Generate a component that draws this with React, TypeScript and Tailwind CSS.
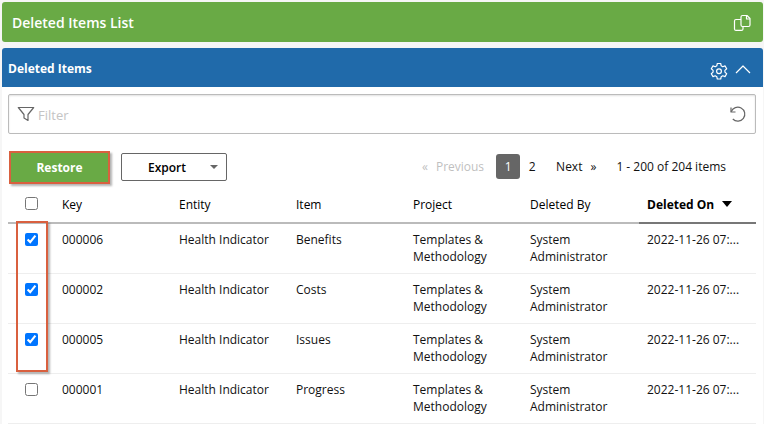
import { ReactNode, useState } from "react";

interface DeletedItem {
  key: string;
  entity: string;
  item: string;
  project: string;
  deletedBy: string;
  deletedOn: string;
}

const makeItem = (key: string, item: string): DeletedItem => ({
  key,
  entity: "Health Indicator",
  item,
  project: "Templates & Methodology",
  deletedBy: "System Administrator",
  deletedOn: "2022-11-26 07:...",
});

const items = [
  makeItem("000006", "Benefits"),
  makeItem("000002", "Costs"),
  makeItem("000005", "Issues"),
  makeItem("000001", "Progress"),
];

const columns = ["Key", "Entity", "Item", "Project", "Deleted By"];

const Icon = ({ children }: { children: ReactNode }) => (
  <svg
    className="h-[18px] w-[18px] shrink-0"
    viewBox="0 0 18 18"
    fill="none"
    stroke="currentColor"
    strokeWidth="1.2"
    strokeLinejoin="round"
    aria-hidden="true"
  >
    {children}
  </svg>
);

const PagesIcon = () => (
  <Icon>
    <path d="M9.500 2.500h4.500l3 3V12a1.500 1.500 0 0 1-1.500 1.500h-6A1.500 1.500 0 0 1 8 12V4a1.500 1.500 0 0 1 1.500-1.500z" />
    <path d="M13.500 2.500V6H17" />
    <path d="M8 6.500H3A1.500 1.500 0 0 0 1.500 8v8A1.500 1.500 0 0 0 3 17.400h5.500A1.500 1.500 0 0 0 10 16v-2.500" />
  </Icon>
);

const GearIcon = () => (
  <Icon>
    <path d="M7.300 1.500h3.400l.5 2.300 1.500.9 2.300-.8 1.700 2.900-1.800 1.600v1.700l1.800 1.600-1.700 2.900-2.300-.8-1.500.9-.5 2.300H7.300l-.5-2.300-1.500-.9-2.300.8-1.700-2.900 1.800-1.600V8.400L1.300 6.800 3 3.900l2.300.8 1.500-.9z" />
    <circle cx="9" cy="9.200" r="2.400" />
  </Icon>
);

const ChevronUpIcon = () => (
  <Icon>
    <path d="M2 11l7-7 7 7" />
  </Icon>
);

const FunnelIcon = () => (
  <Icon>
    <path d="M1.300 2.500h15.400l-5.700 7v6l-4-2.500V9.500z" />
  </Icon>
);

const ResetIcon = () => (
  <Icon>
    <path d="M2 2.500V7h4.500" />
    <path d="M2.200 6.800A7 7 0 1 1 3.800 14" />
  </Icon>
);

const Toolbar = () => (
  <div className="flex h-[34px] items-center justify-between pl-px">
    <div className="flex items-center gap-[11px]">
      <button className="h-[33px] w-[101px] border-2 border-[#d9603f] bg-[#69aa45] pt-px font-bold text-white shadow-[2px_2px_2px_rgba(0,0,0,0.3)]">
        Restore
      </button>
      <button className="flex h-7 w-[106px] items-center justify-end gap-6 rounded-xs border border-[#666] bg-white pr-2 font-semibold text-black">
        Export
        <svg className="h-1 w-2 fill-[#666]" viewBox="0 0 8 4" aria-hidden="true">
          <path d="M0 0h8L4 4z" />
        </svg>
      </button>
    </div>
    <nav className="flex items-center pr-[30px] pb-0.5" aria-label="Pagination">
      <button className="mr-3 flex gap-2 text-[#bfbfbf]" disabled>
        <span>«</span>Previous
      </button>
      <button className="h-[25px] w-6 rounded-[3px] bg-[#666] text-white" aria-current="page">
        1
      </button>
      <button className="h-[25px] w-6">2</button>
      <button className="mr-5 ml-3 flex gap-2">
        Next<span>»</span>
      </button>
      <span>1 - 200 of 204 items</span>
    </nav>
  </div>
);

export default function App() {
  const [selected, setSelected] = useState(["000006", "000002", "000005"]);
  const allSelected = selected.length === items.length;

  const toggle = (key: string) =>
    setSelected((prev) =>
      prev.includes(key) ? prev.filter((k) => k !== key) : [...prev, key]
    );

  return (
    <div className="min-h-screen bg-[#f6f6f6] pt-0.5 pr-px pl-0.5 font-['Open_Sans','Noto_Sans',sans-serif] text-[12px] leading-[17px] text-[#111]">
      {/* Page title */}
      <header className="mb-1.5 flex h-10 items-center justify-between rounded-[3px] bg-[#69aa45] pr-3 pl-2.5 text-white">
        <h1 className="text-[14px] font-semibold">Deleted Items List</h1>
        <button aria-label="Copy">
          <PagesIcon />
        </button>
      </header>

      <section>
        <div className="flex h-[39px] items-center justify-between rounded-t-[3px] bg-[#206aaa] pt-0.5 pr-[11px] pl-1.5 text-white">
          <h2 className="font-bold">Deleted Items</h2>
          <div className="flex gap-1.5 pt-1">
            <button aria-label="Settings">
              <GearIcon />
            </button>
            <button aria-label="Collapse">
              <ChevronUpIcon />
            </button>
          </div>
        </div>

        <div className="bg-white pt-[7px] pr-[7px] pl-1.5">
          {/* Filter */}
          <div className="mb-4 flex h-10 items-center gap-[3px] rounded-xs border border-[#bbb] px-2 text-[#666] shadow-[inset_0_1px_2px_rgba(0,0,0,0.12)]">
            <FunnelIcon />
            <input
              className="min-w-0 flex-1 pt-0.5 text-[13px] outline-none placeholder:text-[#c4c4c4]"
              placeholder="Filter"
              aria-label="Filter"
            />
            <button aria-label="Reset filter">
              <ResetIcon />
            </button>
          </div>

          <Toolbar />

          <div className="relative">
            <table className="w-full table-fixed border-separate border-spacing-0 text-left">
              <thead>
                <tr className="h-10 text-black">
                  <th className="w-[46px] border-b-2 border-[#bbb] pl-[17px]">
                    <input
                      type="checkbox"
                      className="block size-[13px]"
                      aria-label="Select all"
                      checked={allSelected}
                      onChange={() => setSelected(allSelected ? [] : items.map((i) => i.key))}
                    />
                  </th>
                  {columns.map((name) => (
                    <th key={name} className="border-b-2 border-[#bbb] px-2 pt-0.5 font-medium">
                      {name}
                    </th>
                  ))}
                  <th className="border-b-2 border-[#777] px-2 pt-0.5 font-bold whitespace-nowrap">
                    <span className="flex items-center gap-2">
                      Deleted On
                      <svg className="h-1.5 w-2.5 fill-black" viewBox="0 0 10 6" aria-hidden="true">
                        <path d="M0 0h10L5 6z" />
                      </svg>
                    </span>
                  </th>
                </tr>
              </thead>
              <tbody className="align-top *:*:border-b *:*:border-[#eee]">
                {items.map((row) => (
                  <tr key={row.key}>
                    <td className="pt-[9px] pl-[17px]">
                      <input
                        type="checkbox"
                        className="block size-[13px]"
                        aria-label={`Select ${row.key}`}
                        checked={selected.includes(row.key)}
                        onChange={() => toggle(row.key)}
                      />
                    </td>
                    <td className="px-2 pt-[7px] pb-2">{row.key}</td>
                    <td className="px-2 pt-[7px] pb-2">{row.entity}</td>
                    <td className="px-2 pt-[7px] pb-2">{row.item}</td>
                    <td className="px-2 pt-[7px] pb-2">{row.project}</td>
                    <td className="px-2 pt-[7px] pb-2">{row.deletedBy}</td>
                    <td className="px-2 pt-[7px] pb-2 whitespace-nowrap">{row.deletedOn}</td>
                  </tr>
                ))}
              </tbody>
            </table>

            {/* Highlight around the ticked rows */}
            <div className="pointer-events-none absolute top-[37px] left-2 h-[151px] w-8 border-2 border-[#d9603f] shadow-[2px_2px_2px_rgba(0,0,0,0.3)]" />
          </div>
        </div>
      </section>
    </div>
  );
}
